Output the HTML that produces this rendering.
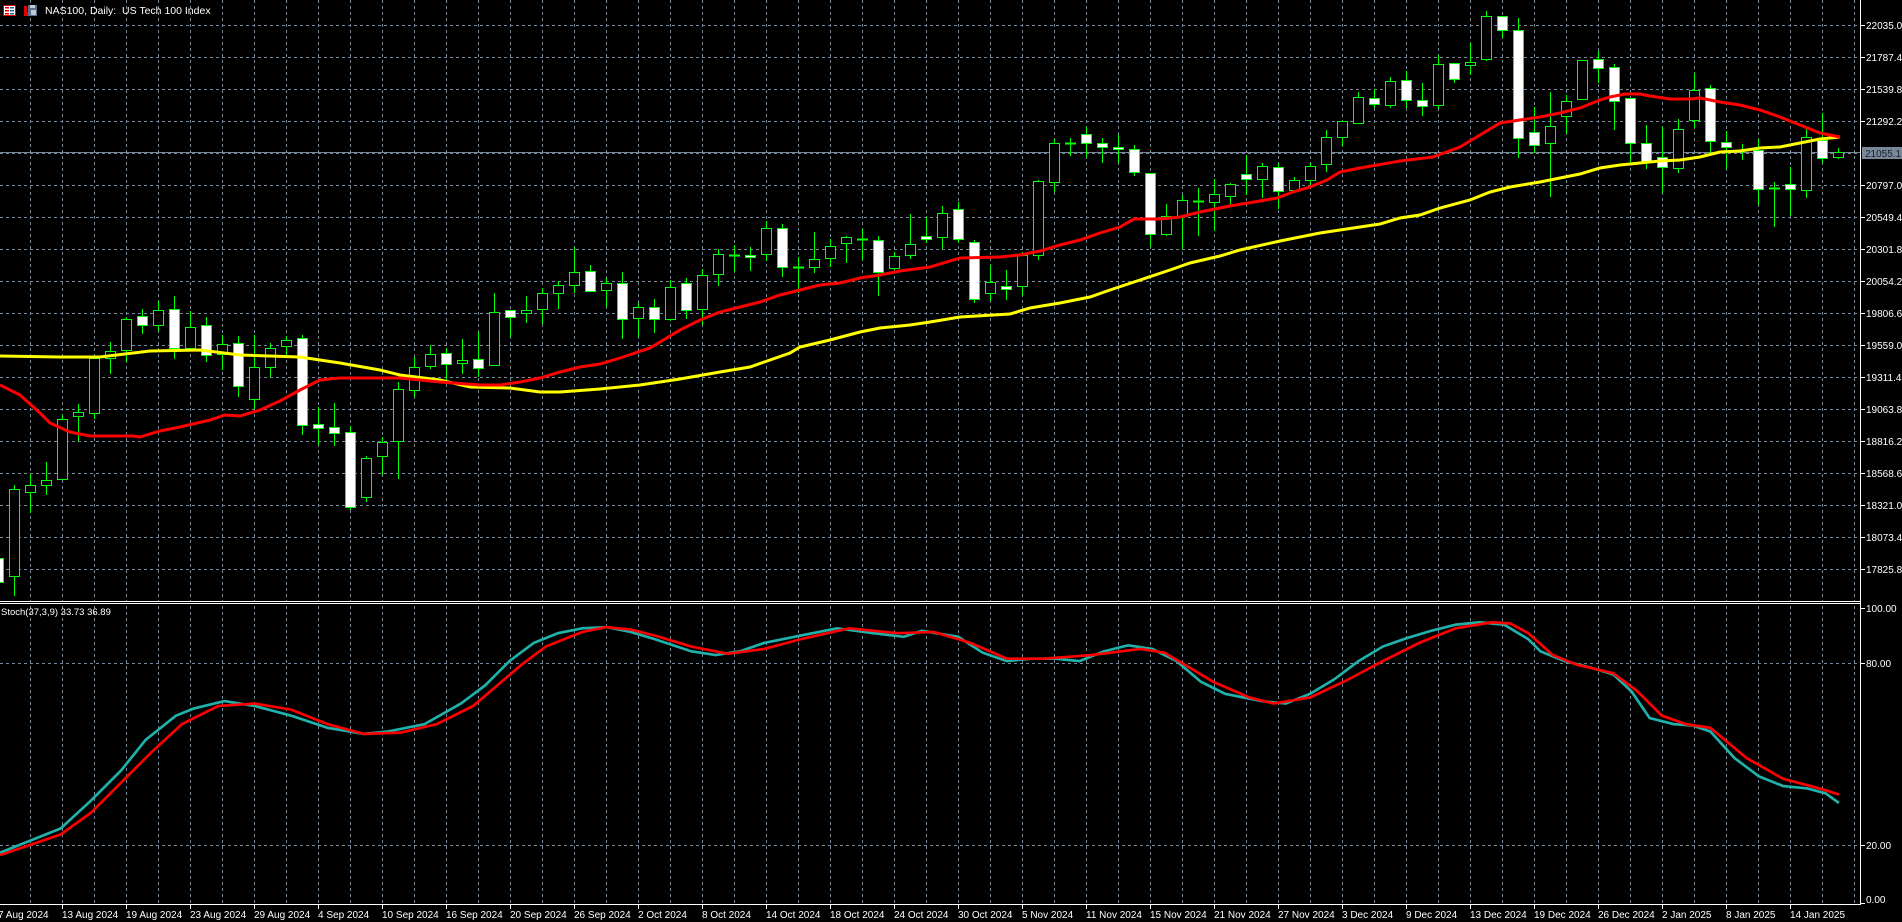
<!DOCTYPE html>
<html><head><meta charset="utf-8">
<style>
html,body{margin:0;padding:0;background:#000;width:1902px;height:922px;overflow:hidden}
svg{display:block}
text{font-family:"Liberation Sans",sans-serif;font-size:10px;fill:#fff}
</style></head><body>
<svg id="s" width="1902" height="922" viewBox="0 0 1902 922" xmlns="http://www.w3.org/2000/svg">
<defs>
<pattern id="gv" patternUnits="userSpaceOnUse" x="0" y="0" width="32" height="6"><rect x="30" y="0" width="1" height="3" fill="#778899"/></pattern>
<pattern id="gh" patternUnits="userSpaceOnUse" x="0" y="0" width="6" height="32"><rect x="0" y="25" width="3" height="1" fill="#778899"/></pattern>
</defs>
<rect width="1902" height="922" fill="#000"/>
<rect x="0" y="0" width="1860" height="601" fill="url(#gv)"/>
<rect x="0" y="0" width="1860" height="590" fill="url(#gh)"/>
<rect x="0" y="604" width="1860" height="300" fill="url(#gv)"/>
<line x1="0" y1="663.5" x2="1860" y2="663.5" stroke="#778899" stroke-dasharray="3 3"/>
<line x1="0" y1="845.5" x2="1860" y2="845.5" stroke="#778899" stroke-dasharray="3 3"/>
<line x1="0" y1="152.5" x2="1860" y2="152.5" stroke="#778899"/>
<g id="candles"></g>
<polyline fill="none" stroke="#ffff00" stroke-width="3" points="0,356 60,357 100,357 150,351 200,350 240,355 300,357 340,363 380,370 400,375 440,380 470,387 510,388 540,392 560,392 600,389 640,385 680,379 720,372 750,367 770,360 790,353 800,347 830,340 860,332 880,328 910,325 930,322 960,317 1010,314 1030,308 1060,303 1090,297 1110,290 1140,280 1170,270 1190,263 1220,256 1240,250 1280,241 1320,233 1360,227 1380,224 1400,218 1420,215 1440,208 1470,200 1490,192 1510,187 1540,182 1560,178 1580,174 1600,168 1620,165 1640,163 1660,161 1680,160 1700,157 1720,152 1740,151 1760,148 1780,147 1800,143 1820,139 1840,137"/>
<polyline fill="none" stroke="#ff0000" stroke-width="3" points="0,385 20,395 40,413 50,423 70,432 90,436 133,436 140,437 160,431 180,427 210,420 225,415 240,416 260,410 280,401 300,390 320,380 340,378 400,378 440,382 480,385 500,385 520,382 540,378 560,372 580,367 600,364 620,358 650,348 660,342 680,330 700,320 720,312 740,307 760,302 780,295 800,290 820,285 840,283 860,278 880,275 900,271 930,267 960,258 1000,257 1020,255 1040,251 1060,245 1080,240 1100,233 1120,227 1134,219 1160,219 1180,217 1200,212 1230,206 1260,201 1277,198 1293,192 1310,187 1327,180 1340,172 1360,168 1400,161 1433,157 1460,147 1480,135 1500,123 1520,120 1540,117 1560,113 1580,108 1600,100 1610,97 1625,94 1640,94 1650,96 1670,99 1690,99 1700,98 1710,100 1720,102 1740,105 1760,110 1780,117 1800,125 1820,133 1840,137"/>
<line x1="0" y1="601.5" x2="1860" y2="601.5" stroke="#fff"/>
<line x1="0" y1="603.5" x2="1860" y2="603.5" stroke="#fff"/>
<line x1="0" y1="904.5" x2="1861" y2="904.5" stroke="#fff"/>
<line x1="1860.5" y1="0" x2="1860.5" y2="905" stroke="#fff"/>
<g transform="scale(1.2130)">
<polyline fill="none" stroke="#20b2aa" stroke-width="2.2" points="0,703 50,683 75,660 100,635 120,610 145,590 160,584 185,578 210,582 240,590 270,600 300,605 320,603 350,597 380,580 400,565 420,545 440,530 460,522 480,518 500,517 520,521 540,527 570,537 590,540 610,537 630,530 660,524 690,518 720,522 745,525 760,520 790,525 810,538 830,545 850,543 870,543 890,545 910,537 930,532 950,535 970,545 990,562 1010,572 1040,578 1060,580 1080,572 1100,560 1120,545 1140,533 1160,526 1180,520 1200,515 1220,513 1240,515 1260,527 1270,537 1290,545 1310,550 1330,556 1345,570 1360,592 1380,597 1395,598 1410,603 1430,625 1450,640 1470,648 1490,650 1505,654 1516,662"/>
<polyline fill="none" stroke="#ff0000" stroke-width="2.2" points="0,705 50,688 75,670 100,645 125,620 150,597 180,582 210,580 240,585 270,597 300,605 330,604 360,597 390,582 410,565 430,548 450,533 480,521 500,517 520,519 540,524 570,533 600,539 630,535 660,527 700,518 740,522 770,521 800,530 830,543 860,543 900,540 940,535 960,538 980,550 1000,562 1030,575 1050,580 1080,575 1110,561 1140,545 1170,530 1200,518 1230,513 1245,514 1260,522 1280,540 1300,548 1330,555 1350,570 1370,590 1390,597 1410,600 1440,625 1470,642 1500,650 1516,655"/>
</g>
<g>
<rect x="3.5" y="5.5" width="12" height="10" fill="#fff" stroke="#e00000"/>
<rect x="5" y="7" width="4" height="1.5" fill="#e00000"/><rect x="10" y="7" width="4" height="1.5" fill="#2060a0"/>
<rect x="5" y="10" width="4" height="1.5" fill="#e00000"/><rect x="10" y="10" width="4" height="1.5" fill="#2060a0"/>
<rect x="5" y="13" width="4" height="1.5" fill="#e00000"/><rect x="10" y="13" width="4" height="1.5" fill="#2060a0"/>
<rect x="24" y="6" width="3" height="10" fill="#e00000"/><rect x="27" y="12" width="3" height="4" fill="#e00000"/>
<rect x="28" y="5" width="9" height="11" fill="#5a6e8a"/><rect x="30" y="5" width="5" height="3" fill="#c0c8d0"/><rect x="31" y="10" width="5" height="5" fill="#c0c8d0"/>
</g>
<text x="45" y="14" style="font-size:10.5px">NAS100, Daily:&#160; US Tech 100 Index</text>
<text x="1" y="615" style="font-size:9.5px">Stoch(37,3,9) 33.73 36.89</text>
<g stroke="#fff"><line x1="1861" y1="25.5" x2="1865" y2="25.5"/><line x1="1861" y1="57.5" x2="1865" y2="57.5"/><line x1="1861" y1="89.5" x2="1865" y2="89.5"/><line x1="1861" y1="121.5" x2="1865" y2="121.5"/><line x1="1861" y1="185.5" x2="1865" y2="185.5"/><line x1="1861" y1="217.5" x2="1865" y2="217.5"/><line x1="1861" y1="249.5" x2="1865" y2="249.5"/><line x1="1861" y1="281.5" x2="1865" y2="281.5"/><line x1="1861" y1="313.5" x2="1865" y2="313.5"/><line x1="1861" y1="345.5" x2="1865" y2="345.5"/><line x1="1861" y1="377.5" x2="1865" y2="377.5"/><line x1="1861" y1="409.5" x2="1865" y2="409.5"/><line x1="1861" y1="441.5" x2="1865" y2="441.5"/><line x1="1861" y1="473.5" x2="1865" y2="473.5"/><line x1="1861" y1="505.5" x2="1865" y2="505.5"/><line x1="1861" y1="537.5" x2="1865" y2="537.5"/><line x1="1861" y1="569.5" x2="1865" y2="569.5"/>
<line x1="1861" y1="608.5" x2="1865" y2="608.5"/><line x1="1861" y1="663.5" x2="1865" y2="663.5"/><line x1="1861" y1="845.5" x2="1865" y2="845.5"/><line x1="1861" y1="903.5" x2="1865" y2="903.5"/></g>
<g>
<text x="1866" y="29">22035.0</text><text x="1866" y="61">21787.4</text><text x="1866" y="93">21539.8</text><text x="1866" y="125">21292.2</text><text x="1866" y="189">20797.0</text><text x="1866" y="221">20549.4</text><text x="1866" y="253">20301.8</text><text x="1866" y="285">20054.2</text><text x="1866" y="317">19806.6</text><text x="1866" y="349">19559.0</text><text x="1866" y="381">19311.4</text><text x="1866" y="413">19063.8</text><text x="1866" y="445">18816.2</text><text x="1866" y="477">18568.6</text><text x="1866" y="509">18321.0</text><text x="1866" y="541">18073.4</text><text x="1866" y="573">17825.8</text>
<text x="1866" y="612">100.00</text><text x="1866" y="667">80.00</text><text x="1866" y="849">20.00</text><text x="1866" y="903">0.00</text>
</g>
<rect x="1862" y="147" width="40" height="12" fill="#778899"/>
<text x="1865" y="157" style="fill:#1a1f26">21055.1</text>
<g id="ticks" stroke="#fff"></g>
<g>
<text x="-2" y="918">7 Aug 2024</text><text x="62" y="918">13 Aug 2024</text><text x="126" y="918">19 Aug 2024</text><text x="190" y="918">23 Aug 2024</text><text x="254" y="918">29 Aug 2024</text><text x="318" y="918">4 Sep 2024</text><text x="382" y="918">10 Sep 2024</text><text x="446" y="918">16 Sep 2024</text><text x="510" y="918">20 Sep 2024</text><text x="574" y="918">26 Sep 2024</text><text x="638" y="918">2 Oct 2024</text><text x="702" y="918">8 Oct 2024</text><text x="766" y="918">14 Oct 2024</text><text x="830" y="918">18 Oct 2024</text><text x="894" y="918">24 Oct 2024</text><text x="958" y="918">30 Oct 2024</text><text x="1022" y="918">5 Nov 2024</text><text x="1086" y="918">11 Nov 2024</text><text x="1150" y="918">15 Nov 2024</text><text x="1214" y="918">21 Nov 2024</text><text x="1278" y="918">27 Nov 2024</text><text x="1342" y="918">3 Dec 2024</text><text x="1406" y="918">9 Dec 2024</text><text x="1470" y="918">13 Dec 2024</text><text x="1534" y="918">19 Dec 2024</text><text x="1598" y="918">26 Dec 2024</text><text x="1662" y="918">2 Jan 2025</text><text x="1726" y="918">8 Jan 2025</text><text x="1790" y="918">14 Jan 2025</text>
</g>
</svg>
<script>
(function(){
var NS="http://www.w3.org/2000/svg";
var d=[
['w',558,582,555,592],['h',489,576,485,596],['h',485,492,474,513],['h',480,485,462,495],['h',419,479,415,479],
['h',412,416,404,441],['h',358,413,358,419],['h',351,358,342,374],['h',319,350,317,362],['w',316,325,309,334],
['h',310,325,301,331],['w',309,348,296,359],['h',327,348,311,348],['w',325,355,317,362],['h',344,354,335,370],
['w',343,386,336,397],['h',367,399,335,409],['h',348,367,343,377],['h',340,346,336,357],['w',338,425,335,435],
['w',424,428,407,445],['w',427,433,403,446],['w',432,507,426,510],['h',458,497,456,502],['h',442,456,437,475],
['h',389,441,382,479],['h',367,390,357,397],['h',354,366,345,369],['w',353,364,348,380],['h',360,363,339,374],
['w',359,368,332,377],['h',312,365,293,366],['w',310,317,310,337],['h',310,313,296,323],['h',293,309,288,324],
['h',285,293,281,309],['h',272,285,247,293],['w',271,291,265,291],['h',283,290,278,307],['w',283,319,272,339],
['h',307,318,303,337],['w',307,319,299,333],['h',287,319,280,321],['w',283,310,278,319],['h',275,309,269,325],
['h',254,274,249,286],['d',255,255,245,272],['w',255,257,247,271],['h',228,254,221,261],['w',228,267,224,277],
['d',267,267,257,293],['h',259,267,232,273],['h',246,258,239,267],['h',237,243,236,263],['d',239,239,229,260],
['w',240,272,236,296],['h',256,268,252,270],['h',244,255,214,259],['w',236,239,217,243],['h',213,237,206,249],
['w',209,239,202,243],['w',242,299,240,303],['h',282,293,265,301],['w',286,289,270,300],['h',255,286,252,296],
['h',181,255,180,260],['h',143,182,139,192],['d',143,143,138,156],['w',134,143,127,158],['w',143,147,138,163],
['w',147,149,135,163],['w',149,172,145,176],['w',173,234,173,247],['h',216,234,204,236],['h',200,216,195,249],
['d',201,201,188,236],['h',194,202,179,231],['h',184,196,183,205],['w',174,179,155,195],['h',166,179,163,198],
['w',167,191,163,209],['h',180,190,177,193],['h',166,180,163,185],['h',137,164,130,172],['h',121,137,121,146],
['h',97,123,92,124],['w',98,104,89,108],['h',81,105,77,108],['w',80,100,71,108],['w',100,106,83,116],
['h',64,105,55,109],['w',63,79,63,83],['h',62,65,43,75],['h',16,59,11,61],['w',16,30,16,38],
['w',30,138,18,158],['w',132,145,107,153],['h',126,143,92,197],['h',101,116,95,134],['h',60,99,60,99],
['w',59,68,51,83],['w',67,101,64,130],['w',98,143,98,163],['w',143,161,125,169],['w',157,167,127,193],
['h',129,168,119,173],['h',90,120,73,128],['w',88,141,85,153],['w',142,147,131,169],['d',150,150,144,160],
['w',150,189,139,205],['d',188,188,182,227],['w',184,189,167,216],['h',137,190,127,198],['w',140,158,113,163],
['h',152,157,148,159]];
var g=document.getElementById('candles');
function el(n,a){var e=document.createElementNS(NS,n);for(var k in a)e.setAttribute(k,a[k]);g.appendChild(e);return e;}
for(var i=0;i<d.length;i++){
 var c=d[i],x=16*i-2;
 el('line',{x1:x+0.5,x2:x+0.5,y1:c[3],y2:c[4],stroke:'#00ff00','stroke-width':1});
 if(c[0]=='d'){el('line',{x1:x-5,x2:x+6,y1:c[1]+0.5,y2:c[1]+0.5,stroke:'#00ff00','stroke-width':2});}
 else{var h=Math.max(c[2]-c[1],2);
 el('rect',{x:x-4.5,y:c[1]+0.5,width:10,height:h,fill:c[0]=='w'?'#fff':'#000',stroke:'#00ff00','stroke-width':1});}
}
var t=document.getElementById('ticks');
for(var j=0;j<29;j++){var xx=-2+64*j+0.5;var l=document.createElementNS(NS,'line');l.setAttribute('x1',xx);l.setAttribute('x2',xx);l.setAttribute('y1',905);l.setAttribute('y2',909);t.appendChild(l);}
})();
</script>
</body></html>
